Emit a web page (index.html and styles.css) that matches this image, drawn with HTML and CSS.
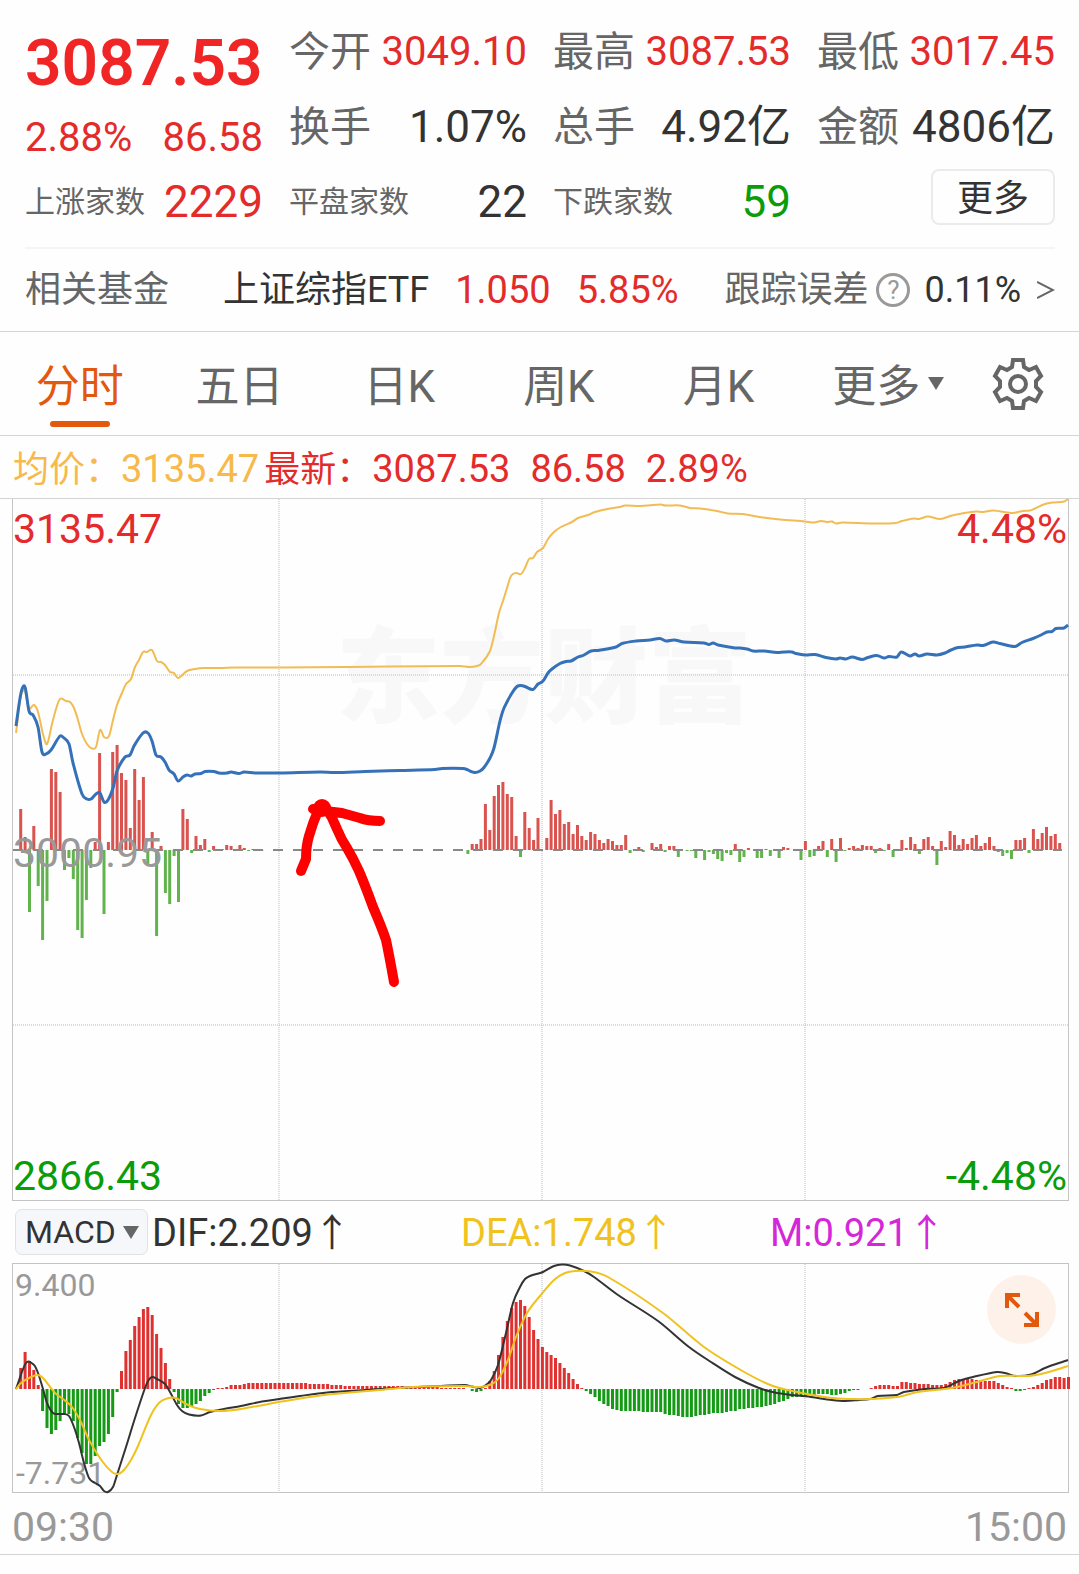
FILE: index.html
```html
<!DOCTYPE html>
<html lang="zh-CN">
<head>
  <meta charset="utf-8">
  <meta name="viewport" content="width=device-width, initial-scale=1">
  <title>上证指数 分时</title>
  <link rel="stylesheet" href="styles.css">
</head>
<body>
  <section class="quote">
    <div class="stats">
      <div class="price">
        <strong class="price-now">3087.53</strong>
        <div class="price-change"><span>2.88%</span><span>86.58</span></div>
      </div>
      <div class="stat"><span class="label">今开</span><span class="value up">3049.10</span></div>
      <div class="stat"><span class="label">最高</span><span class="value up">3087.53</span></div>
      <div class="stat"><span class="label">最低</span><span class="value up">3017.45</span></div>
      <div class="stat"><span class="label">换手</span><span class="value large">1.07%</span></div>
      <div class="stat"><span class="label">总手</span><span class="value large">4.92亿</span></div>
      <div class="stat"><span class="label">金额</span><span class="value large">4806亿</span></div>
      <div class="stat"><span class="label small">上涨家数</span><span class="value large up">2229</span></div>
      <div class="stat"><span class="label small">平盘家数</span><span class="value large">22</span></div>
      <div class="stat"><span class="label small">下跌家数</span><span class="value large down">59</span></div>
      <div class="stat stat-more"><button class="more-button" type="button">更多</button></div>
    </div>
    <a class="fund" href="#fund">
      <span class="fund-label">相关基金</span>
      <span class="fund-name">上证综指ETF</span>
      <span class="fund-price">1.050</span>
      <span class="fund-change">5.85%</span>
      <span class="fund-label fund-error">跟踪误差</span>
      <span class="help">?</span>
      <span class="fund-error-value">0.11%</span>
      <svg class="fund-arrow" width="18" height="20" viewBox="0 0 18 20"><path d="M0 2 L16 10 L0 18" fill="none" stroke="#666" stroke-width="2"/></svg>
    </a>
  </section>

  <nav class="tabs">
    <button class="tab active" type="button">分时</button>
    <button class="tab" type="button">五日</button>
    <button class="tab" type="button">日K</button>
    <button class="tab" type="button">周K</button>
    <button class="tab" type="button">月K</button>
    <button class="tab tab-more" type="button">更多<span class="caret"></span></button>
    <button class="settings" type="button" aria-label="设置">
      <svg width="52" height="54" viewBox="0 0 52 54" fill="none" stroke="#666" stroke-width="4">
        <path d="M21 3 H31 L32 10 L37 13 L44 10 L49 19 L44 24 V30 L49 35 L44 44 L37 41 L32 44 L31 51 H21 L20 44 L15 41 L8 44 L3 35 L8 30 V24 L3 19 L8 10 L15 13 L20 10 Z"/>
        <circle cx="26" cy="27" r="8"/>
      </svg>
    </button>
  </nav>

  <div class="legend">
    <span class="avg"><span class="legend-name">均价：</span>3135.47</span>
    <span class="last"><span class="legend-name">最新：</span>3087.53</span>
    <span class="last">86.58</span>
    <span class="last">2.89%</span>
  </div>

  <div class="chart">
    <svg viewBox="13 499 1055 701">
      <text class="watermark" x="336" y="715">东方财富</text>
      <g class="grid">
        <path d="M279 499 V1200 M542 499 V1200 M805 499 V1200 M13 675 H1068 M13 1025 H1068"/>
      </g>
      <path id="flowUp" class="flow-up"/>
      <path id="flowDown" class="flow-down"/>
      <path class="middle" d="M13 850 H1062"/>
      <path id="avgLine" class="avg-line"/>
      <path id="priceLine" class="price-line"/>
      <text class="axis axis-up" x="13" y="543">3135.47</text>
      <text class="axis axis-up end" x="1067" y="543">4.48%</text>
      <text class="axis axis-mid" x="13" y="867">3000.95</text>
      <text class="axis axis-down" x="13" y="1190">2866.43</text>
      <text class="axis axis-down end" x="1067" y="1190">-4.48%</text>
      <g class="marker">
        <path d="M394 982 Q389 954 386 940 Q382 928 373 907 Q365 885 359 871 Q353 858 347 848 Q341 839 337 829 Q333 818 326 808"/>
        <path d="M301 871 L306 859 Q306 846 309 836 Q313 822 318 811"/>
        <path d="M313 809 Q330 812 342 813 L360 818 Q368 821 380 821"/>
        <circle cx="322" cy="808" r="4"/>
      </g>
    </svg>
  </div>

  <div class="indicator">
    <div class="select-box">
      <select class="indicator-select" aria-label="指标">
        <option>MACD</option>
        <option>KDJ</option>
        <option>RSI</option>
      </select>
      <span class="caret"></span>
    </div>
    <div class="indicator-values">
      <span class="dif">DIF:2.209↑</span>
      <span class="dea">DEA:1.748↑</span>
      <span class="m">M:0.921↑</span>
    </div>
  </div>

  <div class="chart macd">
    <svg viewBox="13 1264 1055 228">
      <g class="grid">
        <path d="M279 1264 V1492 M542 1264 V1492 M805 1264 V1492"/>
      </g>
      <path id="macdUp" class="macd-up"/>
      <path id="macdDown" class="macd-down"/>
      <text class="axis-small" x="15" y="1296">9.400</text>
      <text class="axis-small" x="16" y="1484">-7.731</text>
      <path id="difLine" class="dif-line"/>
      <path id="deaLine" class="dea-line"/>
    </svg>
    <button class="expand" type="button" aria-label="全屏">
      <svg width="34" height="34" viewBox="0 0 34 34" fill="none" stroke="#e2590e" stroke-width="4">
        <path d="M2 15 V2 H15 M2 2 L14 14 M32 19 V32 H19 M32 32 L20 20"/>
      </svg>
    </button>
  </div>

  <div class="times"><span>09:30</span><span>15:00</span></div>

  <script src="script.js"></script>
</body>
</html>
```

FILE: styles.css
```css
* {
  box-sizing: border-box;
}
body {
  margin: 0;
  background-color: #fefefe;
  color: #333;
  font-family: Roboto, "Noto Sans CJK SC", sans-serif;
  font-size: 40px;
  line-height: 48px;
}
button, select {
  font-family: inherit;
  color: inherit;
  border: none;
  background: none;
  padding: 0;
  margin: 0;
  cursor: pointer;
}
a {
  color: inherit;
  text-decoration: none;
}
svg {
  display: block;
}
.up {
  color: #e42b2b;
}
.down {
  color: #0a9c0a;
}

/* quote header */
.quote {
  padding: 14px 24px 0 25px;
  border-bottom: 1px solid #d4d4d4;
}
.stats {
  display: grid;
  grid-template-columns: repeat(4, minmax(0, 1fr));
  grid-auto-rows: 75px;
  column-gap: 26px;
  padding-bottom: 8px;
  border-bottom: 2px solid #f5f5f5;
}
.price {
  grid-row: span 2;
  display: flex;
  flex-direction: column;
  justify-content: space-between;
  padding: 18px 0 2px;
  color: #e42b2b;
}
.price-now {
  font-size: 64px;
  line-height: 64px;
  font-weight: 600;
  color: #f02525;
}
.price-change {
  display: flex;
  justify-content: space-between;
}
.stat {
  display: flex;
  align-items: center;
  justify-content: space-between;
  white-space: nowrap;
}
.stat-more {
  justify-content: flex-end;
}
.label {
  font-size: 41px;
  color: #666;
}
.label.small {
  font-size: 30px;
}
.large {
  font-size: 44px;
}
.more-button {
  width: 124px;
  height: 56px;
  margin-bottom: 10px;
  padding-top: 4px;
  border: 2px solid #ebebeb;
  border-radius: 8px;
  font-size: 36px;
  line-height: 48px;
}
.fund {
  display: flex;
  align-items: center;
  height: 82px;
  font-size: 36px;
  white-space: nowrap;
}
.fund-label {
  color: #666;
}
.fund-name {
  margin-left: 54px;
}
.fund-price, .fund-change {
  margin-left: 26px;
  font-size: 38px;
  color: #e42b2b;
}
.fund-error {
  margin-left: auto;
}
.help {
  width: 34px;
  height: 34px;
  margin: 0 14px 0 8px;
  border: 3px solid #999;
  border-radius: 50%;
  font-size: 26px;
  line-height: 28px;
  text-align: center;
  color: #999;
}
.fund-arrow {
  margin-left: 16px;
}

/* period tabs */
.tabs {
  display: grid;
  grid-template-columns: repeat(5, 8fr) 9fr 4fr;
  align-items: center;
  height: 104px;
  padding-right: 21px;
  border-bottom: 1px solid #d4d4d4;
}
.tab {
  position: relative;
  height: 103px;
  padding-top: 8px;
  font-size: 44px;
  line-height: 95px;
  color: #666;
}
.tab.active {
  color: #e2590e;
}
.tab.active::after {
  content: "";
  position: absolute;
  left: 50%;
  bottom: 8px;
  width: 60px;
  height: 6px;
  margin-left: -30px;
  border-radius: 3px;
  background-color: #e2590e;
}
.caret {
  display: inline-block;
  border: 8px solid transparent;
  border-top: 13px solid #666;
  border-bottom: none;
}
.tab-more .caret {
  margin-left: 8px;
  vertical-align: 12px;
}
.settings {
  display: flex;
  justify-content: center;
}

/* chart legend */
.legend {
  display: flex;
  align-items: center;
  height: 63px;
  padding: 4px 0 0 13px;
  border-bottom: 1px solid #d4d4d4;
  font-size: 38px;
  white-space: nowrap;
}
.legend-name {
  font-size: 36px;
}
.avg {
  margin-right: 5px;
  color: #f7b94a;
}
.last {
  margin-right: 20px;
  color: #e42b2b;
}

/* charts */
.chart {
  position: relative;
  margin: 0 10px 0 12px;
  border: 1px solid #c4c4c4;
  border-top: none;
}
.macd {
  border-top: 1px solid #c4c4c4;
}
.chart > svg {
  width: 100%;
  height: auto;
  overflow: visible;
}
.chart path {
  fill: none;
}
.grid path {
  stroke: #bbb;
  stroke-width: 1;
  stroke-dasharray: 1 1;
}
.watermark {
  font-size: 104px;
  font-weight: 900;
  fill: #f8f8f8;
}
.flow-up {
  stroke: #d9534f;
  stroke-width: 3;
}
.flow-down {
  stroke: #62b34e;
  stroke-width: 3;
}
.middle {
  stroke: #888;
  stroke-width: 2;
  stroke-dasharray: 10 10;
}
.avg-line {
  stroke: #f2bc55;
  stroke-width: 2;
}
.price-line {
  stroke: #3571b8;
  stroke-width: 3;
}
.axis {
  font-size: 41px;
}
.end {
  text-anchor: end;
}
.axis-up {
  fill: #e42b2b;
}
.axis-mid {
  fill: #999;
}
.axis-down {
  fill: #0a9c0a;
}
.axis-small {
  font-size: 32px;
  fill: #999;
}
.marker {
  fill: #f00;
  stroke: #f00;
  stroke-width: 10;
  stroke-linecap: round;
  stroke-linejoin: round;
}
.macd-up {
  stroke: #e03131;
  stroke-width: 3;
}
.macd-down {
  stroke: #149a14;
  stroke-width: 3;
}
.dif-line {
  stroke: #333;
  stroke-width: 2;
}
.dea-line {
  stroke: #f0c21e;
  stroke-width: 2;
}
.expand {
  position: absolute;
  top: 11px;
  right: 12px;
  display: flex;
  align-items: center;
  justify-content: center;
  width: 69px;
  height: 69px;
  border-radius: 50%;
  background-color: #fef1ea;
}

/* indicator row */
.indicator {
  display: flex;
  align-items: center;
  height: 62px;
  padding-left: 15px;
  font-size: 38px;
}
.select-box {
  position: relative;
  display: flex;
}
.select-box .caret {
  position: absolute;
  right: 9px;
  top: 17px;
  pointer-events: none;
}
.indicator-select {
  appearance: none;
  width: 133px;
  height: 46px;
  padding-left: 9px;
  border: 1px solid #e2e2e4;
  border-radius: 7px;
  background-color: #f6f7fa;
  font-size: 32px;
}
.indicator-values {
  flex: 1;
  display: grid;
  grid-template-columns: repeat(3, 1fr);
  margin-left: 4px;
  padding-top: 2px;
  white-space: nowrap;
}
.dea {
  color: #f0c21e;
}
.m {
  color: #d428d8;
}

.times {
  display: flex;
  justify-content: space-between;
  padding: 10px 12px 3px;
  border-bottom: 1px solid #d4d4d4;
  font-size: 41px;
  color: #999;
}
```

FILE: script.js
```js
const FIRST_X = 16.3;
const STEP = 4.384;

// bar height per minute, above (+) or below (-) the base line
const flow = [
  0, 41, 13, -62, 24, -36, -90, -51, 81, 78, 58, -20, -8, -29, -80, -88, -50, -18, 8, 97,
  -64, 8, 98, 105, 77, 70, 22, 81, 50, 73, -16, 18, -86, 4, -43, -54, -6, -52, 41, 31,
  -3, 14, 5, 11, -2, 4, 1, 1, 5, 4, 1, 5, 2, -1, 1, -1, -1, 0, 0, 0,
  0, 0, 0, 0, 0, 0, 0, 0, 0, 0, 0, 0, 0, 0, 0, 0, 0, 0, 0, 0,
  0, 0, 0, 0, 0, 0, 0, 0, 0, 0, 0, 0, 0, 0, 0, 0, 0, 0, 0, 0,
  0, 0, 0, -4, 6, 6, 11, 46, 20, 54, 65, 68, 56, 53, 14, -7, 38, 22, 10, 32,
  0, 12, 50, 36, 40, 26, 28, 16, 25, 14, 10, 18, 16, 10, 7, 11, 9, 5, 5, 15,
  -3, 1, 3, -2, 0, 7, 3, 6, -2, 4, 4, -7, 0, -1, -1, -8, 0, -10, -2, -4,
  -9, -11, -3, -5, 6, -12, -7, 2, 0, -8, -8, 1, -6, 0, -8, 3, 2, 0, -1, -10,
  9, -7, -6, 4, 9, -7, 11, -12, 12, -1, 2, 4, 2, 5, 4, 4, -3, 2, -1, 6,
  -7, 0, 10, 2, 13, 6, -4, 11, 13, 4, -15, 9, 3, 19, 15, 5, 11, 6, 12, 15,
  4, 7, 13, 4, -2, -6, -3, -9, 10, 10, 12, -3, 21, 11, 17, 23, 14, 16, 7
];

const macd = [
  0, 21, 37, 28, 19, 4, -22, -39, -45, -41, -32, -26, -25, -32, -49, -64, -75, -75, -67, -57,
  -53, -45, -28, -3, 18, 38, 49, 63, 72, 80, 82, 74, 55, 41, 26, 10, -3, -15, -19, -19,
  -17, -15, -12, -7, -4, -1, 1, 1, 2, 4, 4, 4, 5, 6, 6, 6, 6, 6, 6, 6,
  6, 6, 6, 6, 6, 6, 6, 5, 5, 5, 5, 5, 4, 4, 4, 3, 3, 3, 3, 3,
  3, 3, 3, 3, 3, 3, 3, 3, 3, 2, 2, 2, 2, 2, 2, 2, 2, 1, 1, 1,
  1, 1, 1, 0, -2, -3, -2, 1, 8, 18, 34, 52, 68, 81, 87, 89, 83, 72, 59, 50,
  42, 37, 34, 31, 26, 21, 16, 10, 5, 1, -2, -5, -8, -12, -15, -17, -20, -21, -22, -22,
  -22, -22, -22, -23, -23, -23, -23, -23, -25, -26, -26, -27, -28, -28, -28, -27, -26, -26, -25, -24,
  -24, -24, -23, -22, -22, -20, -20, -19, -19, -18, -18, -17, -16, -15, -13, -12, -10, -8, -8, -7,
  -7, -6, -6, -5, -5, -5, -6, -6, -5, -4, -2, -1, -1, 0, 0, 1, 3, 4, 4, 4,
  3, 3, 7, 7, 6, 6, 5, 5, 5, 4, 4, 4, 5, 7, 9, 10, 10, 10, 10, 9,
  9, 8, 8, 8, 6, 4, 2, 1, -2, -2, -1, 1, 2, 4, 6, 9, 10, 12, 12, 11, 12
];

const avgPoints = "16,733 21,695 25,692 29,708 34,705 38,712 43,734 47,744 52,724 56,709 60,699 66,701 70,702 74,708 78,720 82,734 87,744 91,748 96,747 100,730 104,737 109,736 113,720 117,705 122,693 126,684 131,679 135,667 139,660 143,652 147,652 152,650 157,661 161,662 165,665 170,672 174,673 178,678 187,671 195,669 204,668 220,668 235,667.5 280,667.5 350,667 460,666 470,667 477,666 481,664 490,651 494,636 499,613 503,601 507,588 511,576 516,573 521,574 525,568 529,559 533,558 537,552 543,548 548,539 554,532 561,527 572,522 578,518 588,515 595,512 610,508.5 620,507 625,505.5 640,506 661,504.5 665,505.5 680,505.5 690,508 700,508.5 717,511 728,513.5 742,514 763,517.5 780,519.5 805,521.5 814,522.5 821,521 827,522 832,521.5 836,523.5 842,522.5 873,523.5 896,523 902,521 914,518.5 919,519 928,516.5 940,519 952,515.5 962,513.5 976,511.5 983,512 993,510.5 1011,513 1018,512 1023,511 1030,510.5 1035,508.5 1045,504 1052,502.5 1064,501.5 1068,499";

const pricePoints = "16,726 21,693 25,687 29,711 33,715 38,727 42,752 46,754 51,750 60,736 64,738 69,744 73,763 82,794 87,799 91,799 96,794 100,793 104,802 108,800 113,788 117,771 125,757 130,755 134,746 143,733 148,733 152,741 156,755 161,757 165,762 169,770 174,774 178,781 183,777 187,775 191,776 195,774 201,773.5 205,771.5 214,771.5 219,773 227,773 231,772 239,773.5 244,772 255,773 280,773 320,772 335,772.5 365,771.5 400,770.5 435,769.5 442,768.5 463,768.5 467,769.5 471,771.5 475,772.5 480,771 484,767.5 490,758 494,748 500,721 504,708 512,693 517,686.5 521,685.5 525,686.5 533,689.5 538,684 543,681 548,673 552,669 560,663.5 566,661.5 571,661 578,657 583,655.5 591,651 598,650.5 616,647 622,643.5 636,641 650,640 660,638.5 666,641 674,640 684,642 704,643 709,644.5 713,643 718,645 735,648 740,648 747,649 753,651 764,651 777,652.5 784,652 792,652 796,653.5 805,655 815,654.5 826,657.5 836,659 840,658 846,659 852,657 862,659.5 868,657.5 877,655.5 884,658 889,656.5 897,657 901,652 910,656 915,654 919,656 927,654 937,655 945,653 951,650 958,647.5 965,647 977,645 983,645.5 993,642 1000,643.5 1015,646.5 1022,642.5 1033,638.5 1041,635 1047,632 1052,631.5 1056,628.5 1064,628 1068,625";

const difPoints = "16,1389 26,1363 34,1365 38,1373 43,1389 47,1403 53,1413 58,1414 64,1414 69,1416 74,1427 79,1443 84,1463 89,1478 95,1483 100,1486 104,1491 108,1492 113,1487 117,1475 126,1447 135,1418 145,1388 148,1381 152,1377 157,1379 165,1384 170,1392 177,1405 182,1411 189,1414.5 201,1415.5 210,1412 224,1409 241,1406 262,1401.5 300,1396 327,1392.5 365,1390 396,1388 441,1386 465,1385 472,1386.5 480,1388 486,1385 491,1380 498,1365 506,1333 513,1303 520,1287 525,1279 530,1276 540,1273 543,1272 554,1266 562,1264.5 570,1265.5 584,1271 594,1277 618,1295 658,1321 689,1347 711,1362 735,1377 759,1388 777,1393 811,1397 832,1400 845,1401 859,1400 870,1399 878,1396 897,1395 904,1392 925,1389 944,1388 959,1381 973,1377 997,1372 1005,1373 1016,1376 1031,1374.5 1045,1368 1059,1363 1068,1360";

const deaPoints = "16,1389 21,1383 31,1377 38,1375 43,1378 55,1393 63,1399 72,1407 81,1422 89,1440 102,1461 112,1472 118,1474 124,1470 131,1460 138,1446 151,1415 160,1402 169,1398 176,1398 186,1404 200,1409 220,1411 241,1409 279,1402 324,1395 379,1390 413,1387 465,1386 480,1387 492,1384 499,1378 508,1360 516,1337 527,1313 540,1296 554,1280 565,1273 575,1271 591,1271.5 608,1277 663,1313 704,1347 746,1373 773,1386 797,1392 832,1398 852,1399 870,1399 897,1397 918,1392 952,1388 973,1383 1000,1376 1028,1376 1045,1373 1068,1366";

function drawBars(values, base, upId, downId) {
  let up = "";
  let down = "";
  values.forEach((v, i) => {
    if (v === 0) return;
    const bar = `M${(FIRST_X + i * STEP).toFixed(1)} ${base}v${-v}`;
    if (v > 0) up += bar;
    else down += bar;
  });
  document.getElementById(upId).setAttribute("d", up);
  document.getElementById(downId).setAttribute("d", down);
}

// smooth curve through all points (Catmull-Rom as cubic segments)
function drawLine(id, points) {
  const p = points.split(" ").map(s => s.split(",").map(Number));
  let d = `M${p[0]}`;
  for (let i = 0; i < p.length - 1; i++) {
    const a = p[i - 1] || p[i];
    const b = p[i];
    const c = p[i + 1];
    const e = p[i + 2] || c;
    // handles no longer than the segment itself, so uneven steps do not overshoot
    const k1 = (c[0] - b[0]) / (c[0] - a[0]) / 3;
    const k2 = (c[0] - b[0]) / (e[0] - b[0]) / 3;
    d += `C${b[0] + (c[0] - a[0]) * k1} ${b[1] + (c[1] - a[1]) * k1}`;
    d += ` ${c[0] - (e[0] - b[0]) * k2} ${c[1] - (e[1] - b[1]) * k2} ${c}`;
  }
  document.getElementById(id).setAttribute("d", d);
}

drawBars(flow, 850, "flowUp", "flowDown");
drawBars(macd, 1389, "macdUp", "macdDown");
drawLine("avgLine", avgPoints);
drawLine("priceLine", pricePoints);
drawLine("difLine", difPoints);
drawLine("deaLine", deaPoints);
```
